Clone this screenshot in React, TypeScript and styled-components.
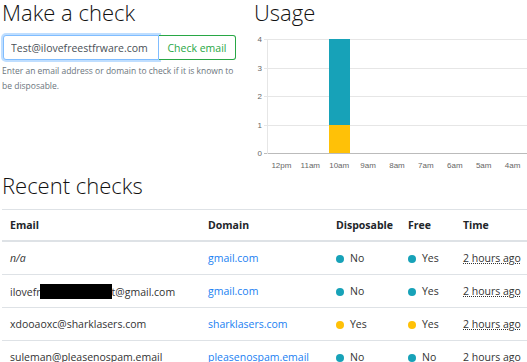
import styled, { createGlobalStyle } from "styled-components";

const GlobalStyle = createGlobalStyle`
  body {
    margin: 0;
    background: #fff;
    color: #212529;
    font-family: "Open Sans", "Liberation Sans", sans-serif;
  }
`;

const Page = styled.div`
  padding-left: 2px;
  width: 525px;
  overflow: hidden;
`;

const TopRow = styled.div`
  display: grid;
  grid-template-columns: 252px 1fr;
`;

const Col = styled.div``;

const Heading = styled.h2`
  margin: 0;
  font-size: 22px;
  font-weight: 300;
  line-height: 24px;
  color: #111;
`;

const InputGroup = styled.div`
  display: flex;
  margin-top: 11px;
  height: 25px;
  width: 234px;
`;

const Input = styled.input`
  box-sizing: border-box;
  width: 156px;
  height: 100%;
  margin: 0 0 0 1px;
  border: 1px solid #80bdff;
  border-radius: 3px 0 0 3px;
  box-shadow: 0 0 0 2px rgba(0, 123, 255, 0.25);
  padding: 0 7px;
  font-family: inherit;
  font-size: 10.5px;
  color: #495057;
  outline: none;
`;

const Button = styled.button`
  box-sizing: border-box;
  flex: 1;
  height: 100%;
  border: 1px solid #28a745;
  border-left: none;
  border-radius: 0 3px 3px 0;
  background: #fff;
  color: #28a745;
  font-family: inherit;
  font-size: 10.5px;
  padding: 0 6px;
  white-space: nowrap;
`;

const Help = styled.p`
  margin: 3px 0 0;
  width: 236px;
  font-size: 8.5px;
  line-height: 15px;
  color: #6c757d;
`;

const Chart = styled.svg`
  display: block;
  margin-top: 8px;
  font-family: "Liberation Sans", Arial, sans-serif;
`;

const RecentHeading = styled(Heading)`
  margin-top: 1px;
`;

const Table = styled.table`
  margin-top: 12px;
  width: 525px;
  border-collapse: collapse;
  table-layout: fixed;
  font-size: 10.5px;
`;

const Th = styled.th<{ $w: number }>`
  width: ${(p) => p.$w - 16}px;
  height: 30px;
  padding: 0 8px;
  text-align: left;
  font-weight: 700;
  border-top: 1px solid #dee2e6;
  border-bottom: 2px solid #dee2e6;
  white-space: nowrap;
`;

const Td = styled.td`
  height: 32px;
  padding: 0 8px;
  border-top: 1px solid #dee2e6;
  white-space: nowrap;
  overflow: hidden;
  color: #333;
`;

const Link = styled.a`
  color: #1a7ff2;
  text-decoration: none;
`;

const Dot = styled.span<{ $warn: boolean }>`
  display: inline-block;
  width: 8px;
  height: 8px;
  border-radius: 50%;
  margin-right: 6px;
  vertical-align: -1px;
  background: ${(p) => (p.$warn ? "#ffc107" : "#17a2b8")};
`;

const Redacted = styled.span`
  display: inline-block;
  width: 72px;
  height: 15px;
  margin-left: -1px;
  vertical-align: -3px;
  background: #000;
`;

const Ago = styled.abbr`
  text-decoration: underline dotted;
  text-underline-offset: 1px;
`;

const hours = ["12pm", "11am", "10am", "9am", "8am", "7am", "6am", "5am", "4am"];
const gridY = [7, 36, 64, 93, 121];

function UsageChart() {
  const left = 13;
  const step = 260 / hours.length;
  return (
    <Chart width={273} height={140}>
      {gridY.map((y, i) => (
        <g key={y}>
          <line
            x1={10}
            x2={273}
            y1={y + 0.5}
            y2={y + 0.5}
            stroke={i === 4 ? "#bbb" : "#e6e6e6"}
          />
          <text x={8} y={y + 3} fontSize={8} fill="#666" textAnchor="end">
            {4 - i}
          </text>
        </g>
      ))}
      <line x1={left + 0.5} x2={left + 0.5} y1={7} y2={122} stroke="#e6e6e6" />
      <rect x={75} y={7} width={21} height={86} fill="#17a2b8" />
      <rect x={75} y={93} width={21} height={28} fill="#ffc107" />
      {hours.map((h, i) => (
        <text
          key={h}
          x={left + step * (i + 0.5)}
          y={136}
          fontSize={8}
          fill="#666"
          textAnchor="middle"
        >
          {h}
        </text>
      ))}
    </Chart>
  );
}

type Check = {
  email: React.ReactNode;
  domain: string;
  disposable: boolean;
  free: boolean;
};

const checks: Check[] = [
  { email: <i>n/a</i>, domain: "gmail.com", disposable: false, free: true },
  {
    email: (
      <>
        ilovefr
        <Redacted />
        t@gmail.com
      </>
    ),
    domain: "gmail.com",
    disposable: false,
    free: true,
  },
  { email: "xdooaoxc@sharklasers.com", domain: "sharklasers.com", disposable: true, free: true },
  { email: "suleman@pleasenospam.email", domain: "pleasenospam.email", disposable: false, free: false },
];

export default function App() {
  return (
    <Page>
      <GlobalStyle />
      <TopRow>
        <Col>
          <Heading>Make a check</Heading>
          <InputGroup>
            <Input defaultValue="Test@ilovefreestfrware.com" />
            <Button>Check email</Button>
          </InputGroup>
          <Help>
            Enter an email address or domain to check if it is known to be
            disposable.
          </Help>
        </Col>
        <Col>
          <Heading>Usage</Heading>
          <UsageChart />
        </Col>
      </TopRow>
      <RecentHeading>Recent checks</RecentHeading>
      <Table>
        <thead>
          <tr>
            <Th $w={198}>Email</Th>
            <Th $w={128}>Domain</Th>
            <Th $w={72}>Disposable</Th>
            <Th $w={55}>Free</Th>
            <Th $w={72}>Time</Th>
          </tr>
        </thead>
        <tbody>
          {checks.map((c, i) => (
            <tr key={i}>
              <Td>{c.email}</Td>
              <Td>
                <Link href="#">{c.domain}</Link>
              </Td>
              <Td>
                <Dot $warn={c.disposable} />
                {c.disposable ? "Yes" : "No"}
              </Td>
              <Td>
                <Dot $warn={c.disposable} />
                {c.free ? "Yes" : "No"}
              </Td>
              <Td>
                <Ago title="2 hours ago">2 hours ago</Ago>
              </Td>
            </tr>
          ))}
        </tbody>
      </Table>
    </Page>
  );
}
